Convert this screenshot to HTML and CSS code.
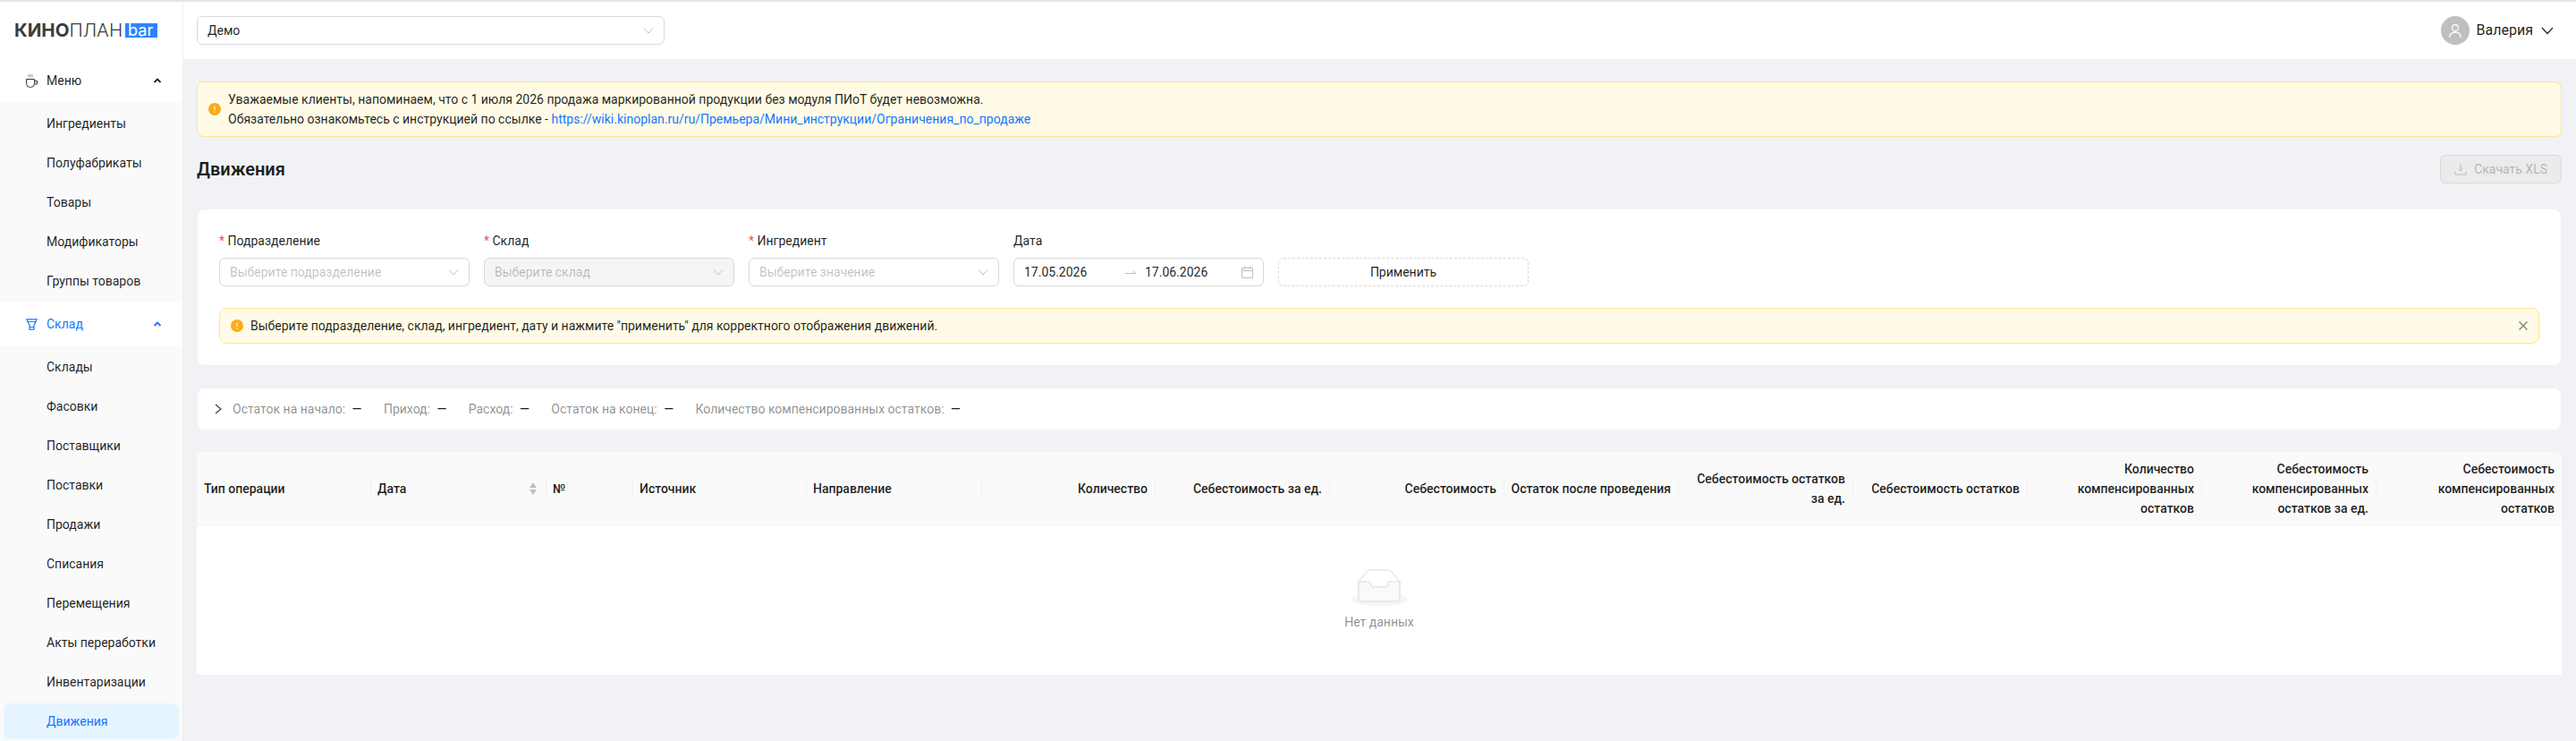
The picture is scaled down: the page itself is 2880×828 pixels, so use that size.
FILE: index.html
```html
<!DOCTYPE html>
<html lang="ru">
<head>
  <meta charset="UTF-8" />
  <title>Киноплан Бар - Движения</title>
  <link rel="stylesheet" href="styles.css">
</head>
<body>
  <div class="app">
    <!-- Sidebar -->
    <aside class="sidebar">
      <div class="logo"><b>КИНО</b><span>ПЛАН</span><i>bar</i></div>

      <div class="group">
        <svg class="group-icon" width="13" height="15" viewBox="0 0 13 15" fill="none" stroke="#333" stroke-width="1"><path d="M.5 5.5h9v5a4 4 0 0 1-4 4h-1a4 4 0 0 1-4-4z"/><path d="M9.500 7.500h3v3.500h-3"/><path d="M3 0v3.500M5 0v3.500M7 0v3.500" stroke="#999"/></svg>
        <span>Меню</span>
        <svg class="group-arrow" width="10" height="6" viewBox="0 0 10 6" fill="none" stroke="#222" stroke-width="1.8"><path d="M1.5 5L5 1.5 8.500 5"/></svg>
      </div>
      <div class="submenu">
        <div class="sub-item">Ингредиенты</div>
        <div class="sub-item">Полуфабрикаты</div>
        <div class="sub-item">Товары</div>
        <div class="sub-item">Модификаторы</div>
        <div class="sub-item">Группы товаров</div>
      </div>

      <div class="group active">
        <svg class="group-icon" width="13" height="13" viewBox="0 0 13 13" fill="none" stroke="#1677ff" stroke-width="1.2"><path d="M.8.8h11.400L9 7.500v4.700H4V7.500z"/><path d="M1.800 3.500h9.400" stroke-width="1"/><path d="M4 9.500h5" stroke-width="1"/></svg>
        <span>Склад</span>
        <svg class="group-arrow" width="10" height="6" viewBox="0 0 10 6" fill="none" stroke="#1677ff" stroke-width="1.8"><path d="M1.5 5L5 1.5 8.500 5"/></svg>
      </div>
      <div class="submenu">
        <div class="sub-item">Склады</div>
        <div class="sub-item">Фасовки</div>
        <div class="sub-item">Поставщики</div>
        <div class="sub-item">Поставки</div>
        <div class="sub-item">Продажи</div>
        <div class="sub-item">Списания</div>
        <div class="sub-item">Перемещения</div>
        <div class="sub-item">Акты переработки</div>
        <div class="sub-item">Инвентаризации</div>
        <div class="sub-item active">Движения</div>
      </div>
    </aside>

    <div class="main">
      <!-- Header -->
      <header class="header">
        <div class="select header-select">
          <span>Демо</span>
          <svg class="chevron" width="12" height="12" viewBox="0 0 12 12" fill="none" stroke="#bfbfbf"><path d="M1 3.500l5 5.500 5-5.500"/></svg>
        </div>
        <div class="user">
          <div class="avatar">
            <svg width="18" height="18" viewBox="0 0 18 18" fill="none" stroke="#fff" stroke-width="1.3"><circle cx="9" cy="6" r="3.500"/><path d="M2.500 17c.5-4 3-6 6.500-6s6 2 6.500 6"/></svg>
          </div>
          <span class="user-name">Валерия</span>
          <svg width="14" height="9" viewBox="0 0 14 9" fill="none" stroke="#222" stroke-width="1.2"><path d="M1 1l6 6.500L13 1"/></svg>
        </div>
      </header>

      <div class="content">
        <div class="alert">
          <svg class="alert-icon" width="14" height="14" viewBox="0 0 14 14"><circle cx="7" cy="7" r="7" fill="#faad14"/><path d="M7 3.500v4.500M7 9.500v1.200" stroke="#fff" stroke-width="1.2"/></svg>
          <div>
            <div>Уважаемые клиенты, напоминаем, что с 1 июля 2026 продажа маркированной продукции без модуля ПИоТ будет невозможна.</div>
            <div>Обязательно ознакомьтесь с инструкцией по ссылке - <a href="#">https://wiki.kinoplan.ru/ru/Премьера/Мини_инструкции/Ограничения_по_продаже</a></div>
          </div>
        </div>

        <div class="title-row">
          <h1>Движения</h1>
          <div class="btn-download">
            <svg width="14" height="14" viewBox="0 0 14 14" fill="none" stroke="#bbb"><path d="M7 1v8M4.500 6.500L7 9l2.500-2.500M1 9.500V13h12V9.500"/></svg>
            <span>Скачать XLS</span>
          </div>
        </div>

        <div class="card filters">
          <div class="filter-row">
            <div class="field">
              <label><em>*</em> Подразделение</label>
              <div class="select"><span class="placeholder">Выберите подразделение</span>
                <svg class="chevron" width="12" height="12" viewBox="0 0 12 12" fill="none" stroke="#bfbfbf"><path d="M1 3.500l5 5.500 5-5.500"/></svg>
              </div>
            </div>
            <div class="field">
              <label><em>*</em> Склад</label>
              <div class="select disabled"><span class="placeholder">Выберите склад</span>
                <svg class="chevron" width="12" height="12" viewBox="0 0 12 12" fill="none" stroke="#bfbfbf"><path d="M1 3.500l5 5.500 5-5.500"/></svg>
              </div>
            </div>
            <div class="field">
              <label><em>*</em> Ингредиент</label>
              <div class="select"><span class="placeholder">Выберите значение</span>
                <svg class="chevron" width="12" height="12" viewBox="0 0 12 12" fill="none" stroke="#bfbfbf"><path d="M1 3.500l5 5.500 5-5.500"/></svg>
              </div>
            </div>
            <div class="field">
              <label>Дата</label>
              <div class="select date">
                <span class="date-from">17.05.2026</span>
                <svg class="date-arrow" width="12" height="8" viewBox="0 0 12 8" fill="none" stroke="#bfbfbf"><path d="M0 5.500h11.500L9 2.500"/></svg>
                <span class="date-to">17.06.2026</span>
                <svg class="date-cal" width="13" height="14" viewBox="0 0 13 14" fill="none" stroke="#bfbfbf"><path d="M.5 2.500h12v11H.5zM.5 5.500h12M3.500.5v3M9.500.5v3"/></svg>
              </div>
            </div>
            <div class="btn-apply">Применить</div>
          </div>

          <div class="alert alert-small">
            <svg class="alert-icon" width="14" height="14" viewBox="0 0 14 14"><circle cx="7" cy="7" r="7" fill="#faad14"/><path d="M7 3.500v4.500M7 9.500v1.200" stroke="#fff" stroke-width="1.2"/></svg>
            <div>Выберите подразделение, склад, ингредиент, дату и нажмите "применить" для корректного отображения движений.</div>
            <svg class="alert-close" width="10" height="10" viewBox="0 0 10 10" fill="none" stroke="#888" stroke-width="1.5"><path d="M.5.5l9 9M9.500.5l-9 9"/></svg>
          </div>
        </div>

        <div class="card summary">
          <svg width="8" height="12" viewBox="0 0 8 12" fill="none" stroke="#333" stroke-width="1.1"><path d="M1 1l6 5-6 5"/></svg>
          <div class="stat">Остаток на начало: <b>—</b></div>
          <div class="stat">Приход: <b>—</b></div>
          <div class="stat">Расход: <b>—</b></div>
          <div class="stat">Остаток на конец: <b>—</b></div>
          <div class="stat">Количество компенсированных остатков: <b>—</b></div>
        </div>

        <!-- Table -->
        <div class="table">
          <div class="thead">
            <div class="th">Тип операции</div>
            <div class="th sortable">Дата
              <svg class="sort" width="8" height="14" viewBox="0 0 8 14" fill="#bfbfbf"><path d="M4 0l4 6H0zM4 14L0 8h8z"/></svg>
            </div>
            <div class="th">№</div>
            <div class="th">Источник</div>
            <div class="th">Направление</div>
            <div class="th right">Количество</div>
            <div class="th right">Себестоимость за ед.</div>
            <div class="th right">Себестоимость</div>
            <div class="th right">Остаток после проведения</div>
            <div class="th right">Себестоимость остатков за ед.</div>
            <div class="th right">Себестоимость остатков</div>
            <div class="th right">Количество компенсированных остатков</div>
            <div class="th right">Себестоимость компенсированных остатков за ед.</div>
            <div class="th right">Себестоимость компенсированных остатков</div>
          </div>
          <div class="empty">
            <svg width="64" height="41" viewBox="0 0 64 41"><g transform="translate(0 1)" fill="none" fill-rule="evenodd"><ellipse fill="#f5f5f5" cx="32" cy="33" rx="32" ry="7"/><g fill-rule="nonzero" stroke="#d9d9d9"><path d="M55 12.760L44.854 1.258C44.367.474 43.656 0 42.907 0H21.093c-.749 0-1.460.474-1.947 1.257L9 12.761V22h46v-9.240z"/><path d="M41.613 15.931c0-1.605.994-2.930 2.227-2.931H55v18.137C55 33.260 53.680 35 52.050 35h-40.100C10.320 35 9 33.259 9 31.137V13h11.160c1.233 0 2.227 1.323 2.227 2.928v.022c0 1.605 1.005 2.901 2.237 2.901h14.752c1.232 0 2.237-1.308 2.237-2.913v-.007z" fill="#fafafa"/></g></g></svg>
            <div class="empty-text">Нет данных</div>
          </div>
        </div>
      </div>
    </div>
  </div>
</body>
</html>
```

FILE: styles.css
```css
* {
  box-sizing: border-box;
}

html, body {
  height: 100%;
}

body {
  margin: 0;
  font-family: Roboto, "Noto Sans", sans-serif;
  font-size: 14px;
  line-height: 22px;
  color: rgba(0, 0, 0, 0.88);
  background: #f0f2f5;
  overflow: hidden;
}

.app {
  display: flex;
  height: 100vh;
  border-top: 2px solid #e5e5e5;
}

/* Sidebar */
.sidebar {
  width: 205px;
  flex-shrink: 0;
  background: #fff;
  border-right: 1px solid #f0f0f0;
  overflow: hidden;
}

.logo {
  display: flex;
  align-items: center;
  height: 64px;
  padding-left: 16px;
  font-family: Inter, sans-serif;
  font-size: 20.5px;
  color: #3c3c3c;
}

.logo b {
  font-weight: 700;
}

.logo span {
  font-weight: 300;
}

.logo i {
  margin-left: 3px;
  padding: 0 3px;
  width: 36px;
  height: 16px;
  line-height: 15px;
  font-style: normal;
  font-weight: 400;
  font-size: 18px;
  color: #fff;
  background: #2b85ff;
}

.group {
  display: flex;
  align-items: center;
  height: 48px;
  padding: 0 23px 0 29px;
}

.group span {
  margin-left: 10px;
  flex: 1;
}

.group.active {
  color: #1677ff;
}

.submenu {
  display: flex;
  flex-direction: column;
  gap: 4px;
  padding: 4px 0;
  background: #fafafa;
}

.sub-item {
  height: 40px;
  line-height: 40px;
  margin: 0 4px;
  padding-left: 48px;
  border-radius: 8px;
}

.sub-item.active {
  color: #1677ff;
  background: #e6f4ff;
}

/* Header */
.main {
  flex: 1;
  min-width: 0;
}

.header {
  display: flex;
  align-items: center;
  justify-content: space-between;
  height: 64px;
  padding: 0 25px 0 15px;
  background: #fff;
}

.header-select {
  width: 523px;
}

.user {
  display: flex;
  align-items: center;
}

.avatar {
  display: flex;
  align-items: center;
  justify-content: center;
  width: 32px;
  height: 32px;
  border-radius: 50%;
  background: #bfbfbf;
}

.user-name {
  margin: 0 9px 0 8px;
  font-size: 16px;
}

/* Form controls */
.select {
  display: flex;
  align-items: center;
  justify-content: space-between;
  height: 32px;
  padding: 0 11px;
  background: #fff;
  border: 1px solid #d9d9d9;
  border-radius: 6px;
}

.select.disabled {
  background: #f5f5f5;
}

.placeholder {
  color: rgba(0, 0, 0, 0.25);
}

.chevron {
  flex-shrink: 0;
}

.date {
  justify-content: flex-start;
}

.date-from {
  width: 113px;
}

.date-to {
  margin-left: 10px;
  flex: 1;
}

.content {
  padding: 25px 16px 0 15px;
}

.alert {
  display: flex;
  align-items: center;
  gap: 8px;
  padding: 8px 12px;
  background: #fffbe6;
  border: 1px solid #ffe58f;
  border-radius: 8px;
}

.alert a {
  color: #1677ff;
  text-decoration: none;
}

.alert-icon {
  flex-shrink: 0;
}

.alert-small {
  height: 40px;
  margin-top: 24px;
}

.alert-small > div {
  flex: 1;
}

.title-row {
  display: flex;
  align-items: center;
  justify-content: space-between;
  margin-top: 20px;
  margin-bottom: 29px;
}

h1 {
  margin: 0;
  font-size: 20px;
  font-weight: 600;
  line-height: 32px;
}

.btn-download {
  display: flex;
  align-items: center;
  gap: 8px;
  height: 32px;
  padding: 0 15px;
  color: rgba(0, 0, 0, 0.25);
  background: #ebebeb;
  border: 1px solid #d9d9d9;
  border-radius: 6px;
}

.card {
  margin: 0 1px;
  background: #fff;
  border-radius: 8px;
}

.filters {
  padding: 24px;
}

.filter-row {
  display: grid;
  grid-template-columns: repeat(5, 280px);
  gap: 16px;
  align-items: end;
}

.field label {
  display: block;
  margin-bottom: 8px;
}

.field em {
  font-style: normal;
  color: #ff4d4f;
}

.btn-apply {
  height: 32px;
  line-height: 30px;
  text-align: center;
  border: 1px dashed #d9d9d9;
  border-radius: 6px;
}

.summary {
  display: flex;
  align-items: center;
  gap: 24.5px;
  height: 46px;
  margin-top: 26px;
  padding: 0 19px;
}

.summary svg {
  margin-right: -12.5px;
}

.stat {
  color: rgba(0, 0, 0, 0.45);
}

.stat b {
  margin-left: 4px;
  color: rgba(0, 0, 0, 0.88);
  font-weight: 500;
}

/* Table */
.table {
  margin-top: 25px;
  background: #fff;
  border-radius: 8px 8px 0 0;
}

.thead {
  display: grid;
  grid-template-columns: 194px 196px 97px 194px 196px 194px repeat(7, 195px) 1fr;
  min-height: 82px;
  align-items: center;
  background: #fafafa;
  border-bottom: 1px solid #f0f0f0;
  border-radius: 8px 8px 0 0;
}

.th {
  position: relative;
  padding: 0 8px;
  font-weight: 500;
}

.th + .th::before {
  content: "";
  position: absolute;
  left: 0;
  top: 50%;
  width: 1px;
  height: 22px;
  margin-top: -11px;
  background: #f0f0f0;
}

.th.right {
  text-align: right;
}

.sort {
  position: absolute;
  right: 10px;
  top: 4px;
}

.empty {
  display: flex;
  flex-direction: column;
  align-items: center;
  height: 167px;
  padding-top: 49px;
}

.empty-text {
  margin-top: 7px;
  color: rgba(0, 0, 0, 0.45);
}
```
